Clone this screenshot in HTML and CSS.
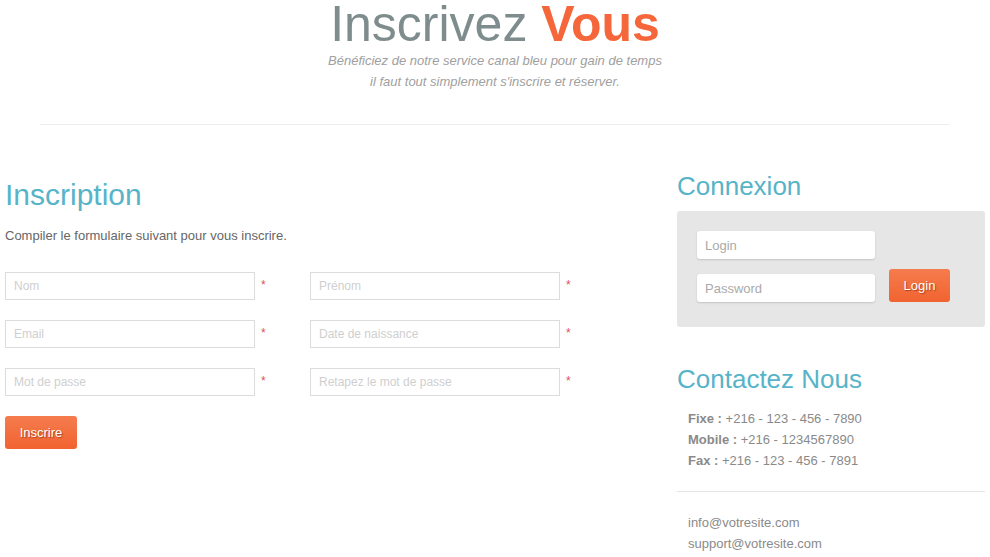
FILE: index.html
```html
<!DOCTYPE html>
<html lang="fr">
<head>
<meta charset="utf-8">
<title>Inscrivez Vous</title>
<link rel="stylesheet" href="styles.css">
</head>
<body>
<header class="hero">
  <h1 class="hero-title">Inscrivez <span class="accent">Vous</span></h1>
  <p class="hero-sub">Bénéficiez de notre service canal bleu pour gain de temps<br>il faut tout simplement s'inscrire et réserver.</p>
</header>
<hr class="sep">
<main class="main">
  <section class="signup">
    <h2 class="title-lg">Inscription</h2>
    <p class="intro">Compiler le formulaire suivant pour vous inscrire.</p>
    <form class="grid-form">
      <div class="field"><input class="inp" type="text" placeholder="Nom"><span class="req">*</span></div>
      <div class="field"><input class="inp" type="text" placeholder="Prénom"><span class="req">*</span></div>
      <div class="field"><input class="inp" type="text" placeholder="Email"><span class="req">*</span></div>
      <div class="field"><input class="inp" type="text" placeholder="Date de naissance"><span class="req">*</span></div>
      <div class="field"><input class="inp" type="text" placeholder="Mot de passe"><span class="req">*</span></div>
      <div class="field"><input class="inp" type="text" placeholder="Retapez le mot de passe"><span class="req">*</span></div>
      <div class="actions"><button class="btn btn-signup" type="button">Inscrire</button></div>
    </form>
  </section>
  <aside class="side">
    <h2 class="title-md">Connexion</h2>
    <div class="login-box">
      <div class="login-fields">
        <input class="inp-soft" type="text" placeholder="Login">
        <input class="inp-soft" type="text" placeholder="Password">
      </div>
      <button class="btn btn-login" type="button">Login</button>
    </div>
    <h2 class="title-md contact-title">Contactez Nous</h2>
    <ul class="contact-list">
      <li><b>Fixe :</b> +216 - 123 - 456 - 7890</li>
      <li><b>Mobile :</b> +216 - 1234567890</li>
      <li><b>Fax :</b> +216 - 123 - 456 - 7891</li>
    </ul>
    <hr class="side-sep">
    <ul class="contact-list">
      <li>info@votresite.com</li>
      <li>support@votresite.com</li>
    </ul>
  </aside>
</main>
</body>
</html>
```

FILE: styles.css
```css
* { box-sizing: border-box; }
body {
  margin: 0;
  font-family: "Liberation Sans", Arial, sans-serif;
  background: #fff;
  color: #666;
}
.hero { text-align: center; padding-top: 1px; }
.hero-title {
  margin: 0;
  font-size: 50px;
  line-height: 46px;
  font-weight: normal;
  color: #7f8c8d;
}
.accent { color: #f5673a; font-weight: bold; }
.hero-sub {
  margin: 3px 0 0;
  font-size: 13px;
  line-height: 21px;
  font-style: italic;
  color: #a0a0a0;
}
.sep {
  margin: 32px 40px 0;
  border: 0;
  border-top: 1px solid #eee;
}
.main {
  display: grid;
  grid-template-columns: 1fr 308px;
  column-gap: 60px;
  padding: 0 5px;
}
.title-lg {
  margin: 52px 0 0;
  font-size: 30px;
  line-height: 36px;
  font-weight: normal;
  color: #57b4c8;
}
.intro {
  margin: 13px 0 0;
  font-size: 13px;
  line-height: 20px;
  color: #666;
}
.grid-form {
  margin-top: 26px;
  display: grid;
  grid-template-columns: 305px 305px;
  row-gap: 20px;
}
.field { display: flex; align-items: flex-start; }
.inp {
  width: 250px;
  height: 28px;
  border: 1px solid #dcdcdc;
  padding: 0 8px;
  font-family: "Liberation Sans", Arial, sans-serif;
  font-size: 12px;
  color: #555;
  outline: none;
}
.inp::placeholder { color: #cfcfcf; }
.req {
  margin-left: 6px;
  margin-top: 6px;
  font-size: 12px;
  color: #e0505a;
}
.actions { grid-column: 1 / -1; }
.btn {
  border: 0;
  border-radius: 3px;
  background: linear-gradient(#f57c4e, #f16330);
  color: #fff;
  font-family: "Liberation Sans", Arial, sans-serif;
  font-size: 13px;
  text-shadow: 1px 1px 1px rgba(120, 40, 10, 0.6);
  cursor: pointer;
}
.btn-signup { width: 72px; height: 33px; }
.title-md {
  margin: 45px 0 0;
  font-size: 26px;
  line-height: 32px;
  font-weight: normal;
  color: #57b4c8;
}
.login-box {
  margin-top: 9px;
  background: #e6e6e6;
  border-radius: 3px;
  padding: 20px 20px 25px;
  display: flex;
  align-items: flex-end;
  gap: 14px;
}
.login-fields { display: flex; flex-direction: column; gap: 15px; }
.inp-soft {
  width: 178px;
  height: 28px;
  border: 0;
  border-radius: 3px;
  background: #fff;
  box-shadow: 0 1px 2px rgba(0, 0, 0, 0.15);
  padding: 0 8px;
  font-family: "Liberation Sans", Arial, sans-serif;
  font-size: 13px;
  outline: none;
}
.inp-soft::placeholder { color: #aaa; }
.btn-login { width: 61px; height: 33px; }
.contact-title { margin-top: 36px; }
.contact-list {
  list-style: none;
  margin: 0;
  padding: 0 0 0 11px;
  font-size: 13px;
  line-height: 21px;
  color: #8a8a8a;
}
.contact-title + .contact-list { margin-top: 13px; }
.contact-list b { color: #8a8a8a; }
.side-sep {
  margin: 20px 0 20px;
  border: 0;
  border-top: 1px solid #e5e5e5;
}
```
